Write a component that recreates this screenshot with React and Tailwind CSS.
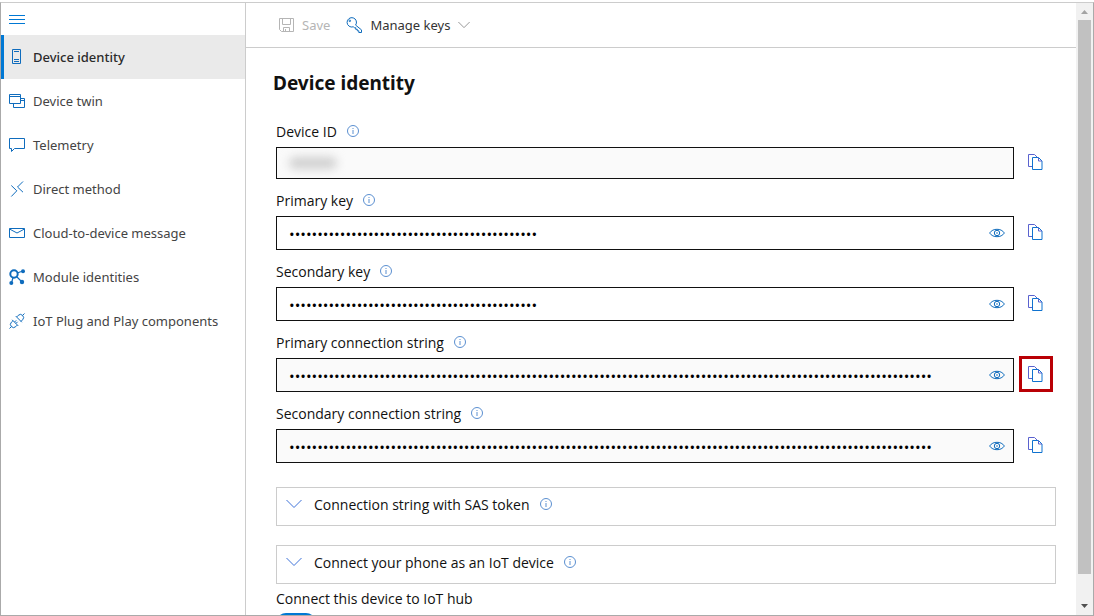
import React, { useState } from "react";

const Icon = ({ children, className = "size-4" }) => (
  <svg viewBox="0 0 16 16" fill="none" stroke="currentColor" className={`shrink-0 ${className}`} aria-hidden="true">
    {children}
  </svg>
);

const MenuIcon = () => (
  <Icon><path d="M0 4.500h16M0 8.500h16M0 12.500h16" stroke="#0078d4" /></Icon>
);
const DeviceIcon = () => (
  <Icon><path d="M3.500 .5h8v14h-8zM5 2.500h5M5 10.500h5M5 12.500h5" /></Icon>
);
const TwinIcon = () => (
  <Icon><path d="M.5 1.500h11v9H.5zM.5 3.500h11M11.500 5.500h4v9h-11v-4M11.500 7.500h4" /></Icon>
);
const ChatIcon = () => (
  <Icon><path d="M.5 1.500h15v10H5.500l-3 3v-3h-2z" /></Icon>
);
const MethodIcon = () => (
  <Icon><path d="M2.300 4.500 7.800 9.800l-5.500 5.700M14 .5 8.500 6l5.500 5.200" /></Icon>
);
const MailIcon = () => (
  <Icon><path d="M.5 3.500h15v9H.5zM.5 4 8 8l7.500-4" /></Icon>
);
const ModuleIcon = () => (
  <Icon>
    <circle cx="5" cy="5" r="3.700" strokeWidth="2" />
    <path d="M8 4 14 2M7.500 7.500 13 13M4 8.500 2.500 14" strokeWidth="1.200" />
    <g fill="currentColor" stroke="none">
      <circle cx="14" cy="2.200" r="2" />
      <circle cx="13" cy="13" r="2.200" />
      <circle cx="2.300" cy="14" r="2" />
    </g>
  </Icon>
);
const PlugIcon = () => (
  <Icon>
    <path d="M.5 15.500 2.400 13.600M3.200 6.800l6 6M4 7.600 2.400 9.200a3.100 3.100 0 0 0 4.400 4.400l1.600-1.600M5.500 9.100 7.200 7.400M6.900 10.500 8.600 8.800M15.500 .5 13.600 2.400M6.800 3.200l6 6M7.600 4 9.200 2.400a3.100 3.100 0 0 1 4.400 4.400l-1.600 1.600" />
  </Icon>
);
const SaveIcon = () => (
  <Icon><path d="M1.500 1.500h14v13h-12l-2-2zM4.500 1.500v6h8v-6M5.500 14.500v-4h6v4M7.500 12v2.500" /></Icon>
);
const KeyIcon = () => (
  <Icon>
    <path d="M9.600 8.100A4.700 4.700 0 1 0 7.300 9.800l1 .9h1.400v1.600h1.600v1.500h1.500v1.700h2.700v-2.600z" />
    <circle cx="3.800" cy="3.800" r=".8" />
  </Icon>
);
const ChevronIcon = ({ className }) => (
  <Icon className={className}><path d="M.5 4 8 11.500 15.500 4" /></Icon>
);
const InfoIcon = () => (
  <svg viewBox="0 0 12 12" className="mb-0.5 size-3 shrink-0" fill="none" aria-hidden="true">
    <circle cx="6" cy="6" r="5.500" stroke="#5b8fd0" />
    <path d="M6 5v4M6 3v1" stroke="#5b8fd0" />
  </svg>
);
const EyeIcon = () => (
  <Icon>
    <path d="M.6 8C2.500 5.300 5 4.300 8 4.300S13.500 5.300 15.400 8C13.500 10.700 11 11.700 8 11.700S2.500 10.700 .6 8z" />
    <circle cx="8" cy="8" r="2.700" />
    <circle cx="8" cy="8" r=".8" fill="currentColor" stroke="none" />
  </Icon>
);
const CopyIcon = () => (
  <Icon>
    <path d="M4 12.500H.5V.5h6l3 3" stroke="#5a62cf" />
    <path d="M4.500 3.500h6l3.500 3.500v8.500H4.500z" stroke="#0f72cf" />
    <path d="M10.500 3.500v3.500H14" stroke="#5a62cf" />
  </Icon>
);

const navItems = [
  { label: "Device identity", icon: DeviceIcon },
  { label: "Device twin", icon: TwinIcon },
  { label: "Telemetry", icon: ChatIcon },
  { label: "Direct method", icon: MethodIcon },
  { label: "Cloud-to-device message", icon: MailIcon },
  { label: "Module identities", icon: ModuleIcon },
  { label: "IoT Plug and Play components", icon: PlugIcon },
];

function Sidebar() {
  return (
    <nav className="w-[245px] shrink-0 border-r border-[#ccc] font-['Noto_Sans','Open_Sans',sans-serif] text-[13px]">
      <button type="button" aria-label="Collapse navigation" className="flex h-8 items-center px-2">
        <MenuIcon />
      </button>
      <ul>
        {navItems.map(({ label, icon: ItemIcon }, i) => (
          <li key={label}>
            <a
              href="#"
              aria-current={i === 0 ? "page" : undefined}
              className={`flex h-11 items-center gap-2 border-l-3 pl-[5px] ${
                i === 0
                  ? "border-[#0078d4] bg-[#eaeaea] font-medium text-[#2b2b2b]"
                  : "border-transparent text-[#444]"
              }`}
            >
              <span className="text-[#0f6cbd]"><ItemIcon /></span>
              <span className="pt-px">{label}</span>
            </a>
          </li>
        ))}
      </ul>
    </nav>
  );
}

function Field({ id, label, length, shaded }) {
  const [shown, setShown] = useState(false);
  const secret = length > 0;
  return (
    <div>
      <div className="flex h-[30px] items-center gap-2.5">
        <label htmlFor={id}>{label}</label>
        <InfoIcon />
      </div>
      <div className={`flex items-center gap-[5px] pr-[3px] ${secret ? "h-[34px]" : "h-8"}`}>
        <div className={`relative flex h-full flex-1 items-center border border-[#111] ${shaded ? "bg-[#fafafa]" : "bg-white"}`}>
          <input
            id={id}
            readOnly
            type={secret && !shown ? "password" : "text"}
            value={"x".repeat(length)}
            className="h-full min-w-0 flex-1 bg-transparent px-3 pt-0.5 text-[15px] text-black outline-none"
          />
          {secret ? (
            <button type="button" aria-label={`Show ${label}`} onClick={() => setShown(!shown)} className="flex h-full w-8 items-center justify-center text-[#0f6cbd]">
              <EyeIcon />
            </button>
          ) : (
            <span className="absolute left-3 h-3 w-12 rounded-full bg-[#d0d0d0] blur-[5px]" />
          )}
        </div>
        <button
          type="button"
          aria-label={`Copy ${label}`}
          className={`mb-0.5 flex h-9 w-[34px] shrink-0 items-center justify-center border-3 ${
            id === "primary-connection" ? "border-[#b90005]" : "border-transparent"
          }`}
        >
          <CopyIcon />
        </button>
      </div>
    </div>
  );
}

function Section({ title }) {
  return (
    <button type="button" aria-expanded="false" className="flex h-[39px] w-full items-center border border-[#ccc] pr-4 pb-1 pl-[9px] text-left">
      <span className="mr-3 text-[#3f72d8]"><ChevronIcon className="mb-0.5 size-4" /></span>
      <span className="mr-2.5">{title}</span>
      <InfoIcon />
    </button>
  );
}

function Scrollbar() {
  return (
    <div className="flex w-[17px] shrink-0 flex-col items-center bg-[#f1f1f1]" aria-hidden="true">
      <svg viewBox="0 0 17 17" className="size-[17px]"><path d="M5 11h7L8.500 7z" fill="#a3a3a3" /></svg>
      <div className="w-[13px] flex-1 bg-[#c1c1c1]" />
      <div className="h-6" />
      <svg viewBox="0 0 17 17" className="size-[17px]"><path d="M5 6h7L8.500 10z" fill="#505050" /></svg>
    </div>
  );
}

export default function App() {
  return (
    <div className="h-screen bg-white pt-0.5 font-['Open_Sans','Noto_Sans',sans-serif] text-sm text-[#111]">
      <div className="flex h-full overflow-hidden border border-t-[#ccc] border-r-[#aaa] border-b-[#aaa] border-l-[#aaa]">
        <Sidebar />
        <div className="flex min-w-0 flex-1 flex-col">
          <div className="flex h-[45px] shrink-0 items-center border-b border-[#ccc] pl-8 font-['Noto_Sans','Open_Sans',sans-serif] text-[13px]">
            <button type="button" disabled className="mr-4 flex items-center gap-2 text-[#b5b5b5]">
              <SaveIcon />
              <span className="pt-px">Save</span>
            </button>
            <button type="button" className="flex items-center gap-2 text-[#333]">
              <span className="text-[#0f6cbd]"><KeyIcon /></span>
              <span className="pt-px">Manage keys</span>
              <span className="text-[#777]"><ChevronIcon className="size-3" /></span>
            </button>
          </div>
          <main className="flex-1 overflow-y-auto pr-5 pl-[30px] [scrollbar-width:none]">
            <h1 className="-ml-[3px] flex h-[69px] items-center pt-0.5 font-['Noto_Sans','Open_Sans',sans-serif] text-[19px] font-bold text-[#111]">Device identity</h1>
            <div className="flex flex-col gap-[7px]">
              <Field id="device-id" label="Device ID" length={0} shaded />
              <Field id="primary-key" label="Primary key" length={44} />
              <Field id="secondary-key" label="Secondary key" length={44} />
              <Field id="primary-connection" label="Primary connection string" length={114} shaded />
              <Field id="secondary-connection" label="Secondary connection string" length={114} shaded />
            </div>
            <div className="mt-6 flex flex-col gap-[19px]">
              <Section title="Connection string with SAS token" />
              <Section title="Connect your phone as an IoT device" />
            </div>
            <div className="pb-6">
              <p id="hub-label" className="flex h-[29px] items-center">Connect this device to IoT hub</p>
              <button type="button" role="switch" aria-checked="true" aria-labelledby="hub-label" className="flex h-5 w-10 items-center justify-end rounded-full bg-[#0078d4] px-1">
                <span className="size-3 rounded-full bg-white" />
              </button>
            </div>
          </main>
        </div>
        <Scrollbar />
      </div>
    </div>
  );
}
